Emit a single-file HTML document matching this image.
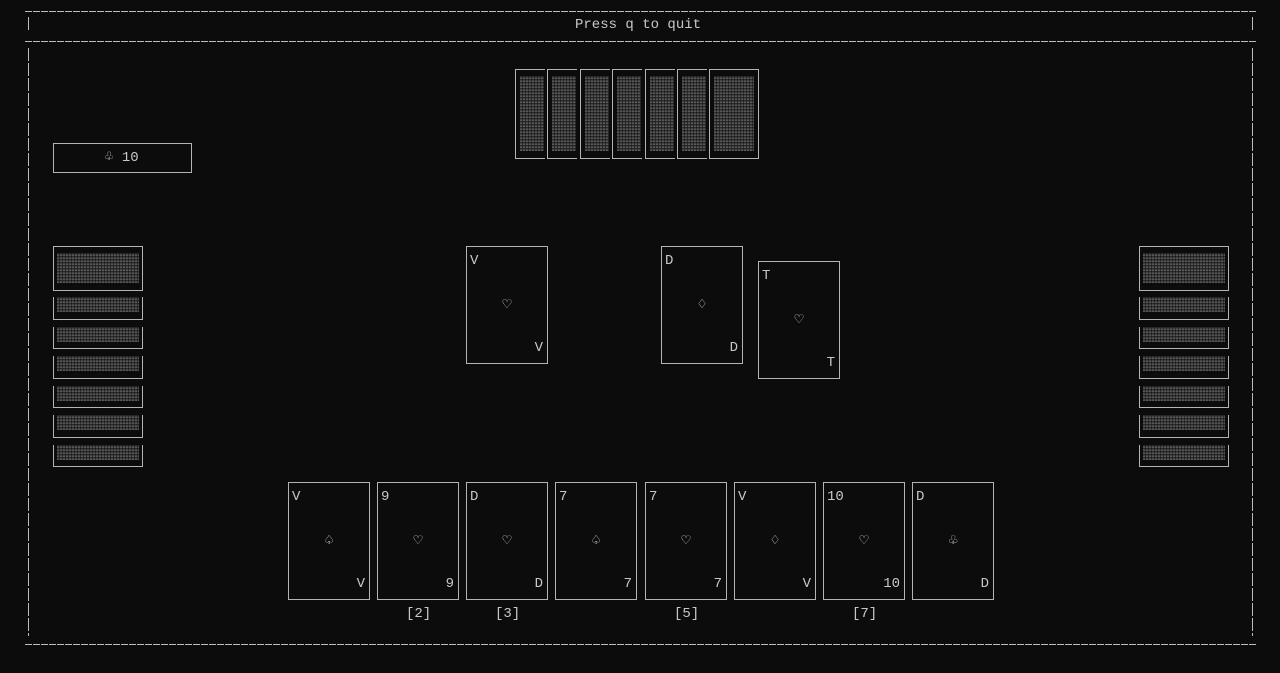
<!DOCTYPE html>
<html><head><meta charset="utf-8"><style>
html,body{margin:0;padding:0;background:#0c0c0c;width:1280px;height:673px;overflow:hidden;position:relative;font-family:"Liberation Mono","DejaVu Sans Mono",monospace;color:#c8c8c8;font-size:14px}
.h{position:absolute;height:1px;background:repeating-linear-gradient(90deg,#bdbdbd 0 7px,transparent 7px 8px)}
.v{position:absolute;width:1px;background:repeating-linear-gradient(180deg,#bdbdbd 0 13px,transparent 13px 15px)}
.b{position:absolute;border:1px solid #b4b4b4;box-sizing:border-box}
.p{position:absolute;background-color:#3c3c3c;background-image:repeating-linear-gradient(90deg,transparent 0 2px,rgba(20,20,20,.6) 2px 3px),repeating-linear-gradient(0deg,#585858 0 1px,#444 1px 2px,#2a2a2a 2px 3px)}
.t{position:absolute;line-height:14px;white-space:pre}
.c{position:absolute;width:82px;height:118px;border:1px solid #b4b4b4;box-sizing:border-box;background:#0c0c0c}
.c .r1{position:absolute;left:3px;top:7px;line-height:14px}
.c .s{position:absolute;left:0;right:0;top:50px;text-align:center;line-height:14px;font-family:"DejaVu Sans Mono",monospace;font-size:15px;color:#d8d8d8}
.c .r2{position:absolute;right:4px;bottom:8px;line-height:14px}
.s2{position:absolute;border-left:1px solid #b4b4b4;border-right:1px solid #b4b4b4;border-bottom:1px solid #b4b4b4;box-sizing:border-box}
.tc{position:absolute;top:69px;height:90px;border:1px solid #b4b4b4;border-right:none;box-sizing:border-box;width:30px}
</style></head><body>
<div class="h" style="left:25px;top:11px;width:1231px"></div>
<div class="h" style="left:25px;top:41px;width:1231px"></div>
<div class="h" style="left:25px;top:644px;width:1231px"></div>
<div class="v" style="left:28px;top:17px;height:15px"></div>
<div class="v" style="left:1252px;top:17px;height:15px"></div>
<div class="v" style="left:28px;top:48px;height:588px"></div>
<div class="v" style="left:1252px;top:48px;height:588px"></div>
<div class="t" style="left:575px;top:18px">Press q to quit</div>

<div class="b" style="left:53px;top:143px;width:139px;height:30px"></div>
<div class="t" style="left:105px;top:150px"><span style="font-family:'DejaVu Sans Mono',monospace;font-size:14px;color:#d8d8d8">♧</span> 10</div>

<!-- top stack -->
<div class="tc" style="left:515px"></div><div class="p" style="left:520px;top:76px;width:24px;height:75px"></div>
<div class="tc" style="left:547px"></div><div class="p" style="left:552px;top:76px;width:24px;height:75px"></div>
<div class="tc" style="left:580px"></div><div class="p" style="left:585px;top:76px;width:24px;height:75px"></div>
<div class="tc" style="left:612px"></div><div class="p" style="left:617px;top:76px;width:24px;height:75px"></div>
<div class="tc" style="left:645px"></div><div class="p" style="left:650px;top:76px;width:24px;height:75px"></div>
<div class="tc" style="left:677px"></div><div class="p" style="left:682px;top:76px;width:24px;height:75px"></div>
<div class="b" style="left:709px;top:69px;width:50px;height:90px"></div><div class="p" style="left:714px;top:76px;width:40px;height:75px"></div>

<!-- left stack -->
<div class="b" style="left:53px;top:246px;width:90px;height:45px"></div><div class="p" style="left:57px;top:253px;width:82px;height:30px"></div>
<div class="s2" style="left:53px;top:297px;width:90px;height:23px"></div><div class="p" style="left:57px;top:297px;width:82px;height:15px"></div>
<div class="s2" style="left:53px;top:327px;width:90px;height:22px"></div><div class="p" style="left:57px;top:327px;width:82px;height:15px"></div>
<div class="s2" style="left:53px;top:356px;width:90px;height:23px"></div><div class="p" style="left:57px;top:356px;width:82px;height:15px"></div>
<div class="s2" style="left:53px;top:386px;width:90px;height:22px"></div><div class="p" style="left:57px;top:386px;width:82px;height:15px"></div>
<div class="s2" style="left:53px;top:415px;width:90px;height:23px"></div><div class="p" style="left:57px;top:415px;width:82px;height:15px"></div>
<div class="s2" style="left:53px;top:445px;width:90px;height:22px"></div><div class="p" style="left:57px;top:445px;width:82px;height:15px"></div>

<!-- right stack -->
<div class="b" style="left:1139px;top:246px;width:90px;height:45px"></div><div class="p" style="left:1143px;top:253px;width:82px;height:30px"></div>
<div class="s2" style="left:1139px;top:297px;width:90px;height:23px"></div><div class="p" style="left:1143px;top:297px;width:82px;height:15px"></div>
<div class="s2" style="left:1139px;top:327px;width:90px;height:22px"></div><div class="p" style="left:1143px;top:327px;width:82px;height:15px"></div>
<div class="s2" style="left:1139px;top:356px;width:90px;height:23px"></div><div class="p" style="left:1143px;top:356px;width:82px;height:15px"></div>
<div class="s2" style="left:1139px;top:386px;width:90px;height:22px"></div><div class="p" style="left:1143px;top:386px;width:82px;height:15px"></div>
<div class="s2" style="left:1139px;top:415px;width:90px;height:23px"></div><div class="p" style="left:1143px;top:415px;width:82px;height:15px"></div>
<div class="s2" style="left:1139px;top:445px;width:90px;height:22px"></div><div class="p" style="left:1143px;top:445px;width:82px;height:15px"></div>

<!-- center -->
<div class="c" style="left:466px;top:246px"><span class="r1">V</span><div class="s">♡</div><span class="r2">V</span></div>
<div class="c" style="left:661px;top:246px"><span class="r1">D</span><div class="s">♢</div><span class="r2">D</span></div>
<div class="c" style="left:758px;top:261px"><span class="r1">T</span><div class="s">♡</div><span class="r2">T</span></div>

<!-- hand -->
<div class="c" style="left:288px;top:482px"><span class="r1">V</span><div class="s">♤</div><span class="r2">V</span></div>
<div class="c" style="left:377px;top:482px"><span class="r1">9</span><div class="s">♡</div><span class="r2">9</span></div>
<div class="c" style="left:466px;top:482px"><span class="r1">D</span><div class="s">♡</div><span class="r2">D</span></div>
<div class="c" style="left:555px;top:482px"><span class="r1">7</span><div class="s">♤</div><span class="r2">7</span></div>
<div class="c" style="left:645px;top:482px"><span class="r1">7</span><div class="s">♡</div><span class="r2">7</span></div>
<div class="c" style="left:734px;top:482px"><span class="r1">V</span><div class="s">♢</div><span class="r2">V</span></div>
<div class="c" style="left:823px;top:482px"><span class="r1">10</span><div class="s">♡</div><span class="r2">10</span></div>
<div class="c" style="left:912px;top:482px"><span class="r1">D</span><div class="s">♧</div><span class="r2">D</span></div>

<div class="t" style="left:406px;top:607px">[2]</div>
<div class="t" style="left:495px;top:607px">[3]</div>
<div class="t" style="left:674px;top:607px">[5]</div>
<div class="t" style="left:852px;top:607px">[7]</div>
</body></html>
